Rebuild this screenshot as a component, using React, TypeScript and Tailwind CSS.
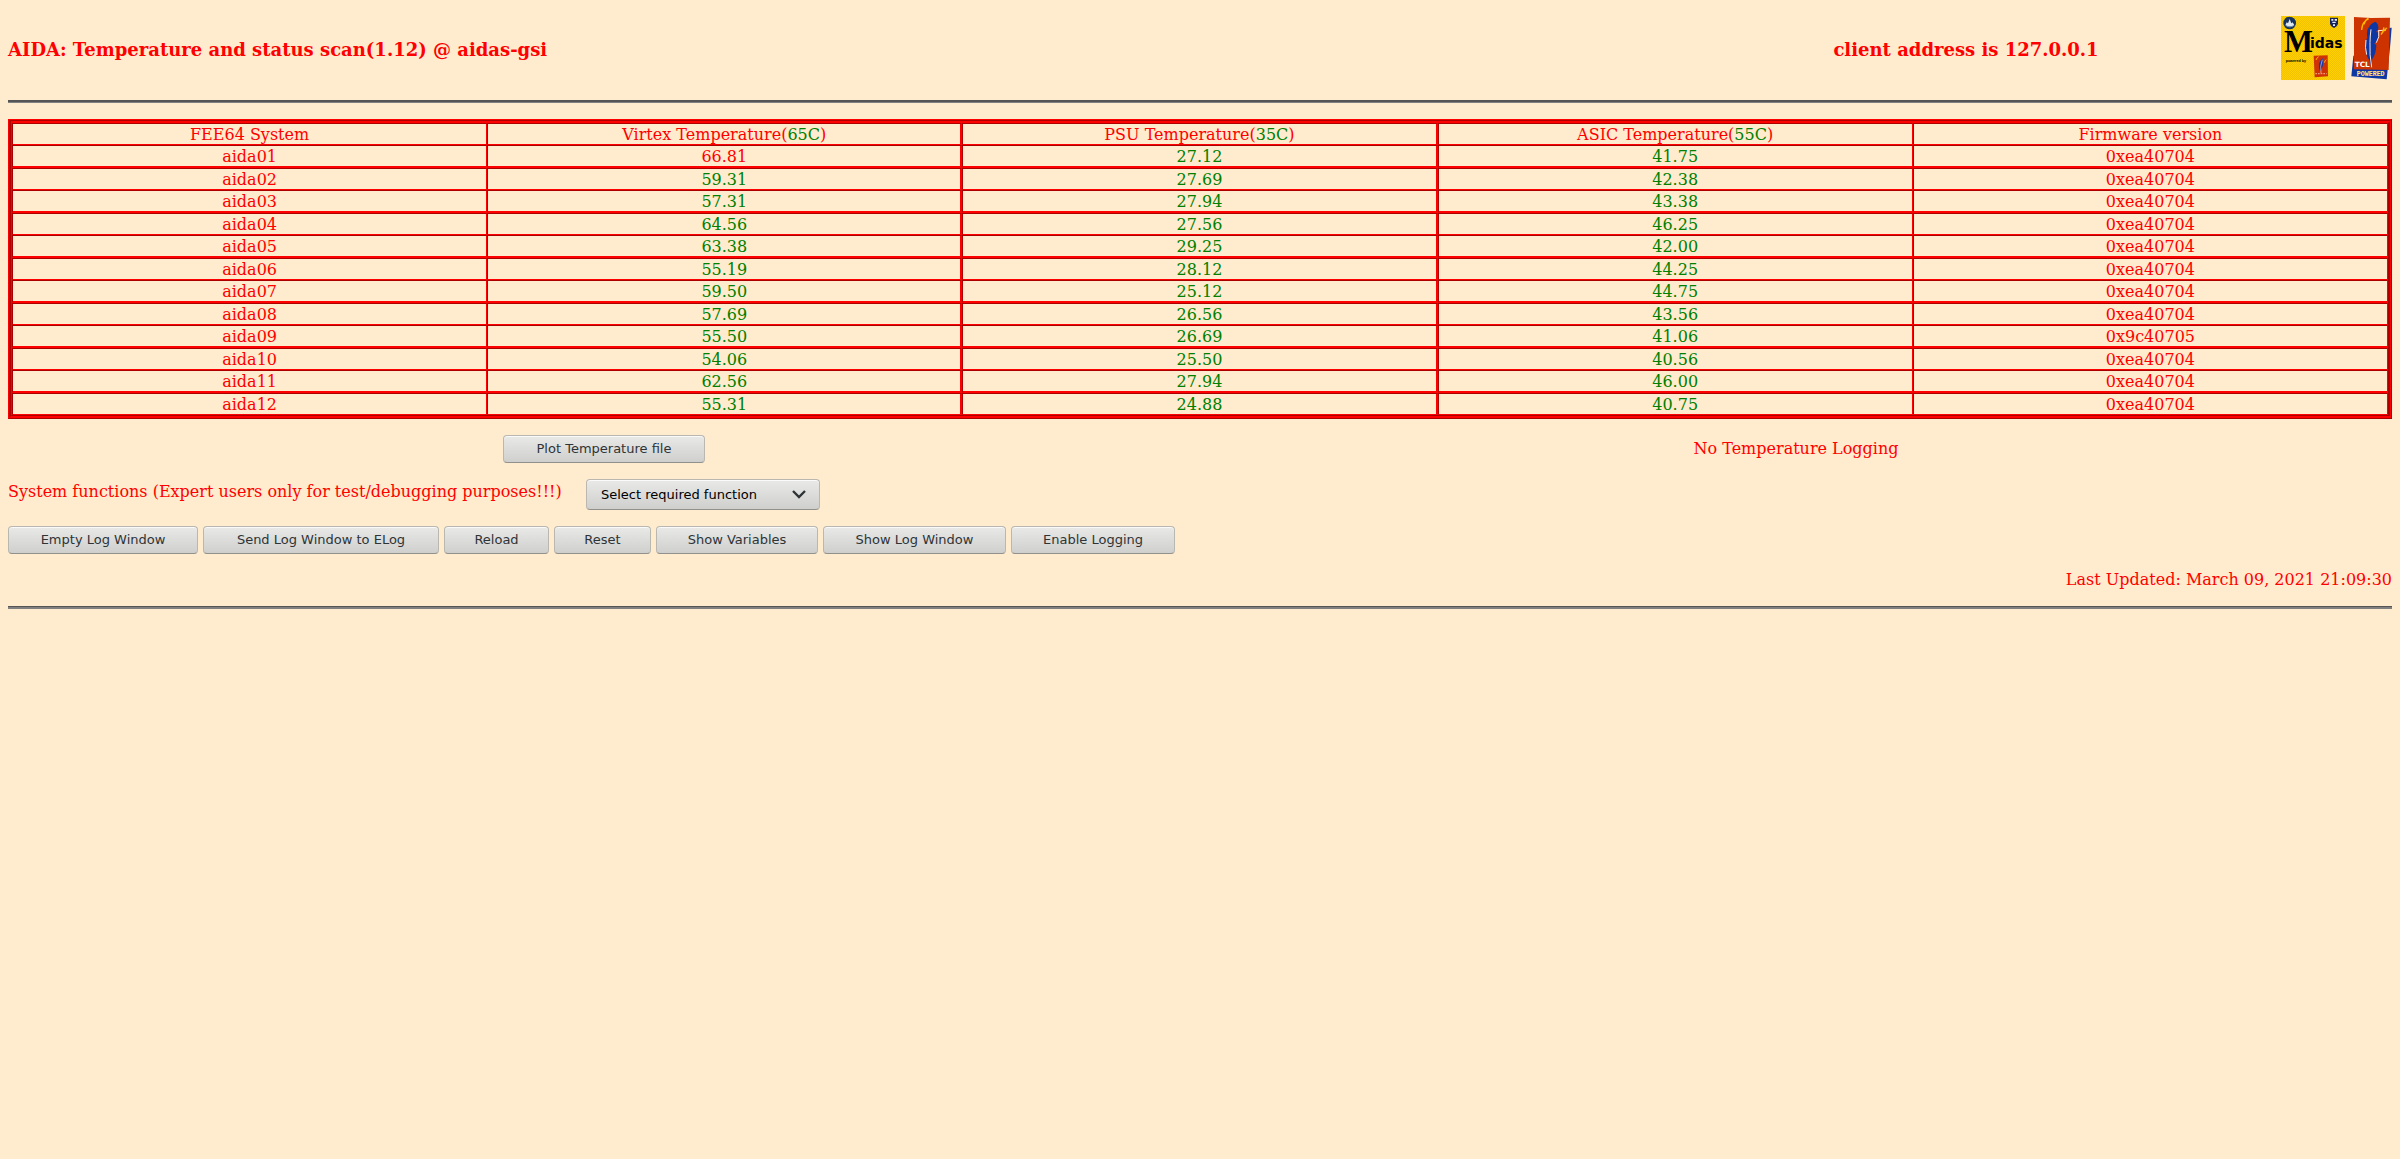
type Reading = {
  name: string;
  virtex: string;
  psu: string;
  asic: string;
  firmware: string;
};

const readings: Reading[] = [
  { name: "aida01", virtex: "66.81", psu: "27.12", asic: "41.75", firmware: "0xea40704" },
  { name: "aida02", virtex: "59.31", psu: "27.69", asic: "42.38", firmware: "0xea40704" },
  { name: "aida03", virtex: "57.31", psu: "27.94", asic: "43.38", firmware: "0xea40704" },
  { name: "aida04", virtex: "64.56", psu: "27.56", asic: "46.25", firmware: "0xea40704" },
  { name: "aida05", virtex: "63.38", psu: "29.25", asic: "42.00", firmware: "0xea40704" },
  { name: "aida06", virtex: "55.19", psu: "28.12", asic: "44.25", firmware: "0xea40704" },
  { name: "aida07", virtex: "59.50", psu: "25.12", asic: "44.75", firmware: "0xea40704" },
  { name: "aida08", virtex: "57.69", psu: "26.56", asic: "43.56", firmware: "0xea40704" },
  { name: "aida09", virtex: "55.50", psu: "26.69", asic: "41.06", firmware: "0x9c40705" },
  { name: "aida10", virtex: "54.06", psu: "25.50", asic: "40.56", firmware: "0xea40704" },
  { name: "aida11", virtex: "62.56", psu: "27.94", asic: "46.00", firmware: "0xea40704" },
  { name: "aida12", virtex: "55.31", psu: "24.88", asic: "40.75", firmware: "0xea40704" },
];

const limits = { virtex: 65, psu: 35, asic: 55 };

const columns = [
  { label: "FEE64 System" },
  { label: "Virtex Temperature", limit: limits.virtex },
  { label: "PSU Temperature", limit: limits.psu },
  { label: "ASIC Temperature", limit: limits.asic },
  { label: "Firmware version" },
];

const actions = [
  { label: "Empty Log Window", width: "w-[190px]" },
  { label: "Send Log Window to ELog", width: "w-[236px]" },
  { label: "Reload", width: "w-[105px]" },
  { label: "Reset", width: "w-[97px]" },
  { label: "Show Variables", width: "w-[162px]" },
  { label: "Show Log Window", width: "w-[183px]" },
  { label: "Enable Logging", width: "w-[164px]" },
];

const control =
  "rounded-[4px] border border-[#b9b7b0] border-b-[#91908c] bg-linear-to-b from-[#e9e9e8] to-[#cfcfcd] font-['DejaVu_Sans',sans-serif] text-[13px] shadow-[inset_0_1px_0_#fafafa]";

// dark edge of a cell is top/left, bright edge is bottom/right
const cell =
  "border-t border-l border-t-[#aa0000] border-l-[#aa0000] border-r-[#ff0000] border-b-[#ff0000] px-0 pt-px pb-0 text-center leading-[19px] font-normal";

// the rules either side of the middle column are a pixel wider
function columnEdge(col: number) {
  return col === 1 || col === 2 ? "border-r-2" : "border-r";
}

function Temperature({ value, limit }: { value: string; limit: number }) {
  return (
    <span className={Number(value) > limit ? "text-[#ff0000]" : "text-[#008000]"}>{value}</span>
  );
}

function MidasLogo() {
  return (
    <svg viewBox="0 0 192 192" className="h-16 w-16" role="img" aria-label="Midas">
      <defs>
        <pattern id="dither" width="6" height="6" patternUnits="userSpaceOnUse">
          <rect width="6" height="6" fill="#ffd000" />
          <rect width="3" height="3" fill="#f2c200" />
          <rect x="3" y="3" width="3" height="3" fill="#f2c200" />
        </pattern>
      </defs>
      <rect width="192" height="192" fill="url(#dither)" />
      <circle cx="26" cy="21" r="19" fill="#17335f" />
      <path d="M13 28 L17 19 L21 22 L26 9 L31 22 L35 19 L40 28 Q26 35 13 28 Z" fill="#dfe8ee" />
      <path d="M16 30 Q26 36 37 30" stroke="#7895ab" strokeWidth="3" fill="none" />
      <path d="M147 5 H171 V22 Q170 31 159 36 Q148 31 147 22 Z" fill="#16245c" />
      <path d="M151 9 H157 V14 H151 Z M161 9 H168 V14 H161 Z M154 17 H164 V21 H154 Z M156 25 H162 V30 H156 Z" fill="#e6ecf5" />
      <text x="9" y="107" fontFamily="Liberation Serif, serif" fontWeight="700" fontSize="92" fill="#000">
        M
      </text>
      <text x="87" y="97" fontFamily="DejaVu Sans, sans-serif" fontWeight="700" fontSize="42" fill="#000">
        idas
      </text>
      <text x="14" y="138" fontFamily="Liberation Sans, sans-serif" fontWeight="700" fontSize="11" fill="#000">
        powered by
      </text>
      <path d="M98 119 L140 118 L141 181 L101 184 Z" fill="#cf3305" />
      <path d="M117 166 Q109 147 119 133 Q123 126 126 128 Q130 142 121 160 Z" fill="#1a35a5" />
      <path d="M120 172 Q116 150 124 131" stroke="#f3cdb8" strokeWidth="2" fill="none" />
      <path d="M105 132 Q108 124 113 122 M130 140 Q132 133 136 131" stroke="#ffb400" strokeWidth="3" fill="none" />
      <path d="M103 173 H137" stroke="#f09a78" strokeWidth="4" strokeDasharray="5 3" />
    </svg>
  );
}

function TclLogo() {
  return (
    <svg viewBox="0 0 123 192" className="h-16 w-[41px]" role="img" aria-label="TCL Powered">
      <path d="M104 36 L122 35 L118 85 L107 190 L1 181 L7 120 Z" fill="#0d37a5" />
      <path d="M9 3 L60 6 L117 5 L113 162 L9 160 Z" fill="#cc3300" />
      <path
        d="M73 17 Q57 23 49 42 Q46 56 49 65 Q41 78 44 100 Q45 121 55 132 L60 150 L64 129 Q75 115 76 88 L70 82 L79 76 Q84 64 82 48 L75 49 L82 39 Q83 23 73 17 Z"
        fill="#0d37a5"
      />
      <path
        d="M60 40 Q57 60 57 80 Q55 115 62 154 M82 44 L105 42 M83 43 Q87 63 76 80 M45 72 Q41 94 47 116"
        stroke="#ffe8dc"
        strokeWidth="3"
        fill="none"
      />
      <path
        d="M32 42 Q33 18 53 8 M39 25 Q42 12 51 8 M90 56 Q98 47 99 34 M94 46 Q103 44 107 35"
        stroke="#ffbb00"
        strokeWidth="4"
        fill="none"
      />
      <text x="11" y="153" fontFamily="DejaVu Sans, sans-serif" fontWeight="700" fontSize="22" fill="#fff">
        TCL
      </text>
      <text x="17" y="179" fontFamily="Liberation Mono, monospace" fontWeight="700" fontSize="20" fill="#fff06a">
        POWERED
      </text>
    </svg>
  );
}

function TemperatureTable() {
  return (
    <div className="mt-4 border border-t-[#ff0000] border-r-[#aa0000] border-b-[#aa0000] border-l-[#ff0000]">
      <div className="border-t border-r border-b-2 border-l-2 border-t-[#aa0000] border-r-[#ff0000] border-b-[#ff0000] border-l-[#aa0000]">
        <div className="border-t-2 border-r-2 border-b border-l border-t-[#ff0000] border-r-[#aa0000] border-b-[#aa0000] border-l-[#ff0000]">
          <table className="w-full table-fixed border-separate border-spacing-0">
            <thead>
              <tr>
                {columns.map((column, col) => (
                  <th key={column.label} scope="col" className={`${cell} border-b ${columnEdge(col)}`}>
                    {column.label}
                    {column.limit && (
                      <>
                        (<span className="text-[#008000]">{column.limit}C</span>)
                      </>
                    )}
                  </th>
                ))}
              </tr>
            </thead>
            <tbody>
              {readings.map((row, index) => {
                const edge = index % 2 === 0 ? "border-b-2" : "border-b";
                return (
                  <tr key={row.name}>
                    <td className={`${cell} ${edge} ${columnEdge(0)}`}>{row.name}</td>
                    <td className={`${cell} ${edge} ${columnEdge(1)}`}>
                      <Temperature value={row.virtex} limit={limits.virtex} />
                    </td>
                    <td className={`${cell} ${edge} ${columnEdge(2)}`}>
                      <Temperature value={row.psu} limit={limits.psu} />
                    </td>
                    <td className={`${cell} ${edge} ${columnEdge(3)}`}>
                      <Temperature value={row.asic} limit={limits.asic} />
                    </td>
                    <td className={`${cell} ${edge} ${columnEdge(4)}`}>{row.firmware}</td>
                  </tr>
                );
              })}
            </tbody>
          </table>
        </div>
      </div>
    </div>
  );
}

export default function App() {
  return (
    <div className="min-h-screen bg-[#ffebcd] p-2 font-['DejaVu_Serif',serif] text-[16px] leading-5 text-[#ff0000]">
      <header className="grid grid-cols-[1fr_630px_111px] items-center pt-2">
        <h1 className="pt-[3px] text-[18px] font-bold">
          AIDA: Temperature and status scan(1.12) @ aidas-gsi
        </h1>
        <h2 className="pt-[3px] text-center text-[18px] font-bold">client address is 127.0.0.1</h2>
        <div className="flex justify-between">
          <MidasLogo />
          <TclLogo />
        </div>
      </header>

      <hr className="mt-5 h-[3px] border-t-2 border-b border-t-[#555555] border-b-[#808080]" />

      <TemperatureTable />

      <div className="mt-4 grid grid-cols-2 items-center text-center">
        <div className="flex justify-center">
          <button type="button" className={`${control} h-[28px] w-[202px] text-[#2e3436]`}>
            Plot Temperature file
          </button>
        </div>
        <p>No Temperature Logging</p>
      </div>

      <div className="mt-4 flex items-start gap-4">
        <label htmlFor="system-function" className="min-w-[562px] pt-[3px]">
          System functions (Expert users only for test/debugging purposes!!!)
        </label>
        <div className="relative">
          <select
            id="system-function"
            className={`${control} block h-[31px] w-[234px] appearance-none pl-[14px] text-black`}
          >
            <option>Select required function</option>
          </select>
          <svg
            viewBox="0 0 14 9"
            className="pointer-events-none absolute top-[11px] right-[14px] h-[9px] w-[14px]"
            fill="none"
            stroke="#2e3436"
            strokeWidth="2.4"
          >
            <path d="M1 1 L7 7 L13 1" />
          </svg>
        </div>
      </div>

      <div className="mt-4 flex flex-wrap gap-[5px]">
        {actions.map((action) => (
          <button
            key={action.label}
            type="button"
            className={`${control} ${action.width} h-[28px] text-[#2e3436]`}
          >
            {action.label}
          </button>
        ))}
      </div>

      <p className="mt-4 text-right">Last Updated: March 09, 2021 21:09:30</p>

      <hr className="mt-4 h-[3px] border-t border-b-2 border-t-[#555555] border-b-[#808080]" />
    </div>
  );
}
